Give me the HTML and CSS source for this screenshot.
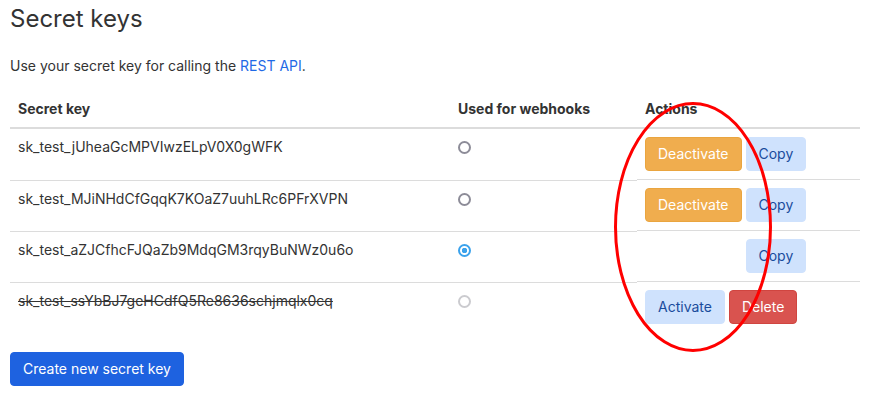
FILE: index.html
```html
<!DOCTYPE html>
<html lang="en">
<head>
    <meta charset="UTF-8">
    <meta name="viewport" content="width=device-width, initial-scale=1.0">
    <title>Secret keys</title>
    <link rel="stylesheet" href="styles.css">
</head>
<body>
    <div class="page">
        <h1>Secret keys</h1>
        <p class="intro">Use your secret key for calling the <a href="#">REST API</a>.</p>

        <table class="keys">
            <thead>
                <tr>
                    <th class="col-key">Secret key</th>
                    <th class="col-hook">Used for webhooks</th>
                    <th>Actions</th>
                </tr>
            </thead>
            <tbody>
                <tr>
                    <td>sk_test_jUheaGcMPVIwzELpV0X0gWFK</td>
                    <td><span class="radio"></span></td>
                    <td class="actions">
                        <button class="btn btn-warning">Deactivate</button>
                        <button class="btn btn-light">Copy</button>
                    </td>
                </tr>
                <tr>
                    <td>sk_test_MJiNHdCfGqqK7KOaZ7uuhLRc6PFrXVPN</td>
                    <td><span class="radio"></span></td>
                    <td class="actions">
                        <button class="btn btn-warning">Deactivate</button>
                        <button class="btn btn-light">Copy</button>
                    </td>
                </tr>
                <tr>
                    <td>sk_test_aZJCfhcFJQaZb9MdqGM3rqyBuNWz0u6o</td>
                    <td><span class="radio checked"></span></td>
                    <td class="actions">
                        <button class="btn btn-warning hidden">Deactivate</button>
                        <button class="btn btn-light">Copy</button>
                    </td>
                </tr>
                <tr class="revoked">
                    <td><s>sk_test_ssYbBJ7geHCdfQ5Re8636schjmqlx0cq</s></td>
                    <td><span class="radio disabled"></span></td>
                    <td class="actions">
                        <button class="btn btn-light">Activate</button>
                        <button class="btn btn-danger">Delete</button>
                    </td>
                </tr>
            </tbody>
        </table>

        <button class="btn btn-primary">Create new secret key</button>
    </div>

    <!-- red annotation drawn over the actions column -->
    <svg class="mark" width="870" height="395" viewBox="0 0 870 395">
        <ellipse cx="693" cy="227" rx="77.5" ry="123.5" fill="none" stroke="#ff0000" stroke-width="3"/>
    </svg>
</body>
</html>
```

FILE: styles.css
```css
body {
    margin: 0;
    font-family: Inter, "Noto Sans", sans-serif;
    font-size: 14px;
    line-height: 20px;
    color: #333;
    background: #fff;
}

.page {
    padding: 4px 10px 0;
}

h1 {
    margin: 0;
    font-size: 24px;
    line-height: 29px;
    font-weight: 400;
}

.intro {
    margin: 23px 0 15px;
}

.intro a {
    color: #1f6ae6;
    text-decoration: none;
}

/* table */
.keys {
    width: 850px;
    border-collapse: collapse;
}

.keys th {
    text-align: left;
    font-weight: 700;
    padding: 8px;
    border-bottom: 2px solid #dcdcdc;
}

.keys td {
    padding: 8px;
    vertical-align: top;
    border-bottom: 1px solid #dcdcdc;
}

.keys tr:last-child td {
    border-bottom: none;
}

.col-key {width: 424px;}
.col-hook {width: 171px;}

.actions {
    display: flex;
    gap: 4px;
}

/* radios */
.radio {
    display: inline-block;
    width: 13px;
    height: 13px;
    margin-top: 4px;
    border: 2px solid #8d8c98;
    border-radius: 50%;
    box-sizing: border-box;
}

.radio.checked {
    border-color: #3ba2ec;
    background: radial-gradient(circle, #3ba2ec 0 2.5px, #fff 3px);
}

.radio.disabled {
    border-color: #cbcbcf;
}

/* buttons */
.btn {
    display: inline-block;
    height: 34px;
    padding: 6px 12px;
    border: 1px solid transparent;
    border-radius: 4px;
    box-sizing: border-box;
    font-family: inherit;
    font-size: 14px;
    line-height: 20px;
    cursor: pointer;
}

.btn-warning {background: #f0ad4e; border-color: #eaa53f; color: #fff;}
.btn-light {background: #cfe2fd; border-color: #cfe2fd; color: #1a4c9c;}
.btn-danger {background: #d9534f; border-color: #d04540; color: #fff;}
.btn-primary {background: #1e62e0; border-color: #1e62e0; color: #fff; margin-top: 20px;}

.hidden {visibility: hidden;}

.mark {
    position: absolute;
    left: 0;
    top: 0;
    pointer-events: none;
}
```
